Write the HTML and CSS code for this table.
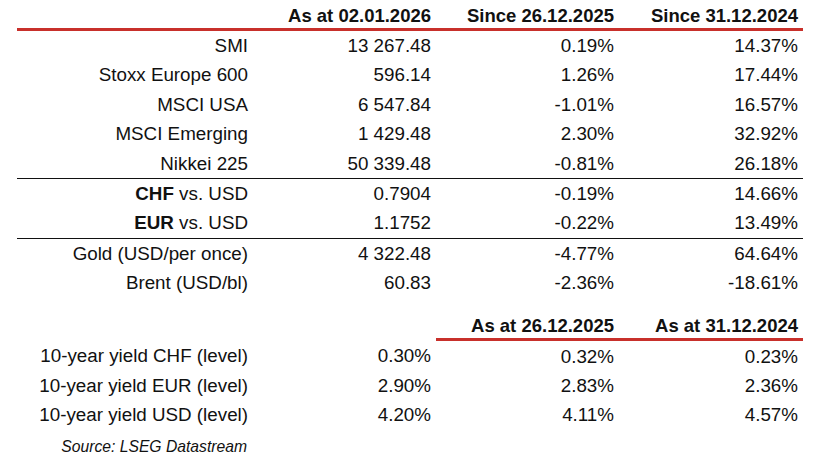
FILE: index.html
```html
<!DOCTYPE html>
<html>
<head>
<meta charset="utf-8">
<link rel="stylesheet" href="styles.css">
</head>
<body>
<div class="page">
  <table class="grid">
    <colgroup>
      <col class="c-label"><col class="c-num"><col class="c-num"><col class="c-last">
    </colgroup>
    <thead>
      <tr class="head red">
        <th></th>
        <th>As at 02.01.2026</th>
        <th>Since 26.12.2025</th>
        <th>Since 31.12.2024</th>
      </tr>
    </thead>
    <tbody>
      <tr><td>SMI</td><td>13 267.48</td><td>0.19%</td><td>14.37%</td></tr>
      <tr><td>Stoxx Europe 600</td><td>596.14</td><td>1.26%</td><td>17.44%</td></tr>
      <tr><td>MSCI USA</td><td>6 547.84</td><td>-1.01%</td><td>16.57%</td></tr>
      <tr><td>MSCI Emerging</td><td>1 429.48</td><td>2.30%</td><td>32.92%</td></tr>
      <tr class="sep"><td>Nikkei 225</td><td>50 339.48</td><td>-0.81%</td><td>26.18%</td></tr>
      <tr><td><b>CHF</b> vs. USD</td><td>0.7904</td><td>-0.19%</td><td>14.66%</td></tr>
      <tr class="sep"><td><b>EUR</b> vs. USD</td><td>1.1752</td><td>-0.22%</td><td>13.49%</td></tr>
      <tr><td>Gold (USD/per once)</td><td>4 322.48</td><td>-4.77%</td><td>64.64%</td></tr>
      <tr><td>Brent (USD/bl)</td><td>60.83</td><td>-2.36%</td><td>-18.61%</td></tr>
    </tbody>
  </table>

  <table class="grid second">
    <colgroup>
      <col class="c-label"><col class="c-num"><col class="c-num"><col class="c-last">
    </colgroup>
    <thead>
      <tr class="head">
        <th></th>
        <th></th>
        <th class="redcell">As at 26.12.2025</th>
        <th class="redcell">As at 31.12.2024</th>
      </tr>
    </thead>
    <tbody>
      <tr class="yield"><td>10-year yield CHF (level)</td><td>0.30%</td><td>0.32%</td><td>0.23%</td></tr>
      <tr class="yield"><td>10-year yield EUR (level)</td><td>2.90%</td><td>2.83%</td><td>2.36%</td></tr>
      <tr class="yield"><td>10-year yield USD (level)</td><td>4.20%</td><td>4.11%</td><td>4.57%</td></tr>
      <tr class="source"><td>Source: LSEG Datastream</td><td></td><td></td><td></td></tr>
    </tbody>
  </table>
</div>
</body>
</html>
```

FILE: styles.css
```css
html, body {
  margin: 0;
  padding: 0;
  background: #ffffff;
}

.page {
  padding: 0 20px 0 17px;
  font-family: "Liberation Sans", Arial, sans-serif;
  font-size: 18.8px;
  color: #111111;
}

.grid {
  border-collapse: collapse;
  table-layout: fixed;
  width: 786px;
}

.c-label { width: 236px; }
.c-num { width: 183px; }
.c-last { width: 184px; }

.grid th,
.grid td {
  text-align: right;
  padding: 4px 5px 4px 0;
  line-height: 21.4px;
  white-space: nowrap;
}

.grid th {
  font-size: 18.5px;
  font-weight: bold;
  padding: 5px 5px 2px 0;
  line-height: 21px;
}

.head.red th {
  border-bottom: 3px solid #c8302b;
}

.head .redcell {
  border-bottom: 3px solid #c8302b;
}

.sep td {
  border-bottom: 1px solid #111111;
}

.second {
  margin-top: 12px;
}

.yield td {
  padding-top: 5px;
  padding-bottom: 3px;
}

.source td {
  font-style: italic;
  font-size: 15.7px;
  padding-top: 7px;
  padding-right: 6px;
}
```
